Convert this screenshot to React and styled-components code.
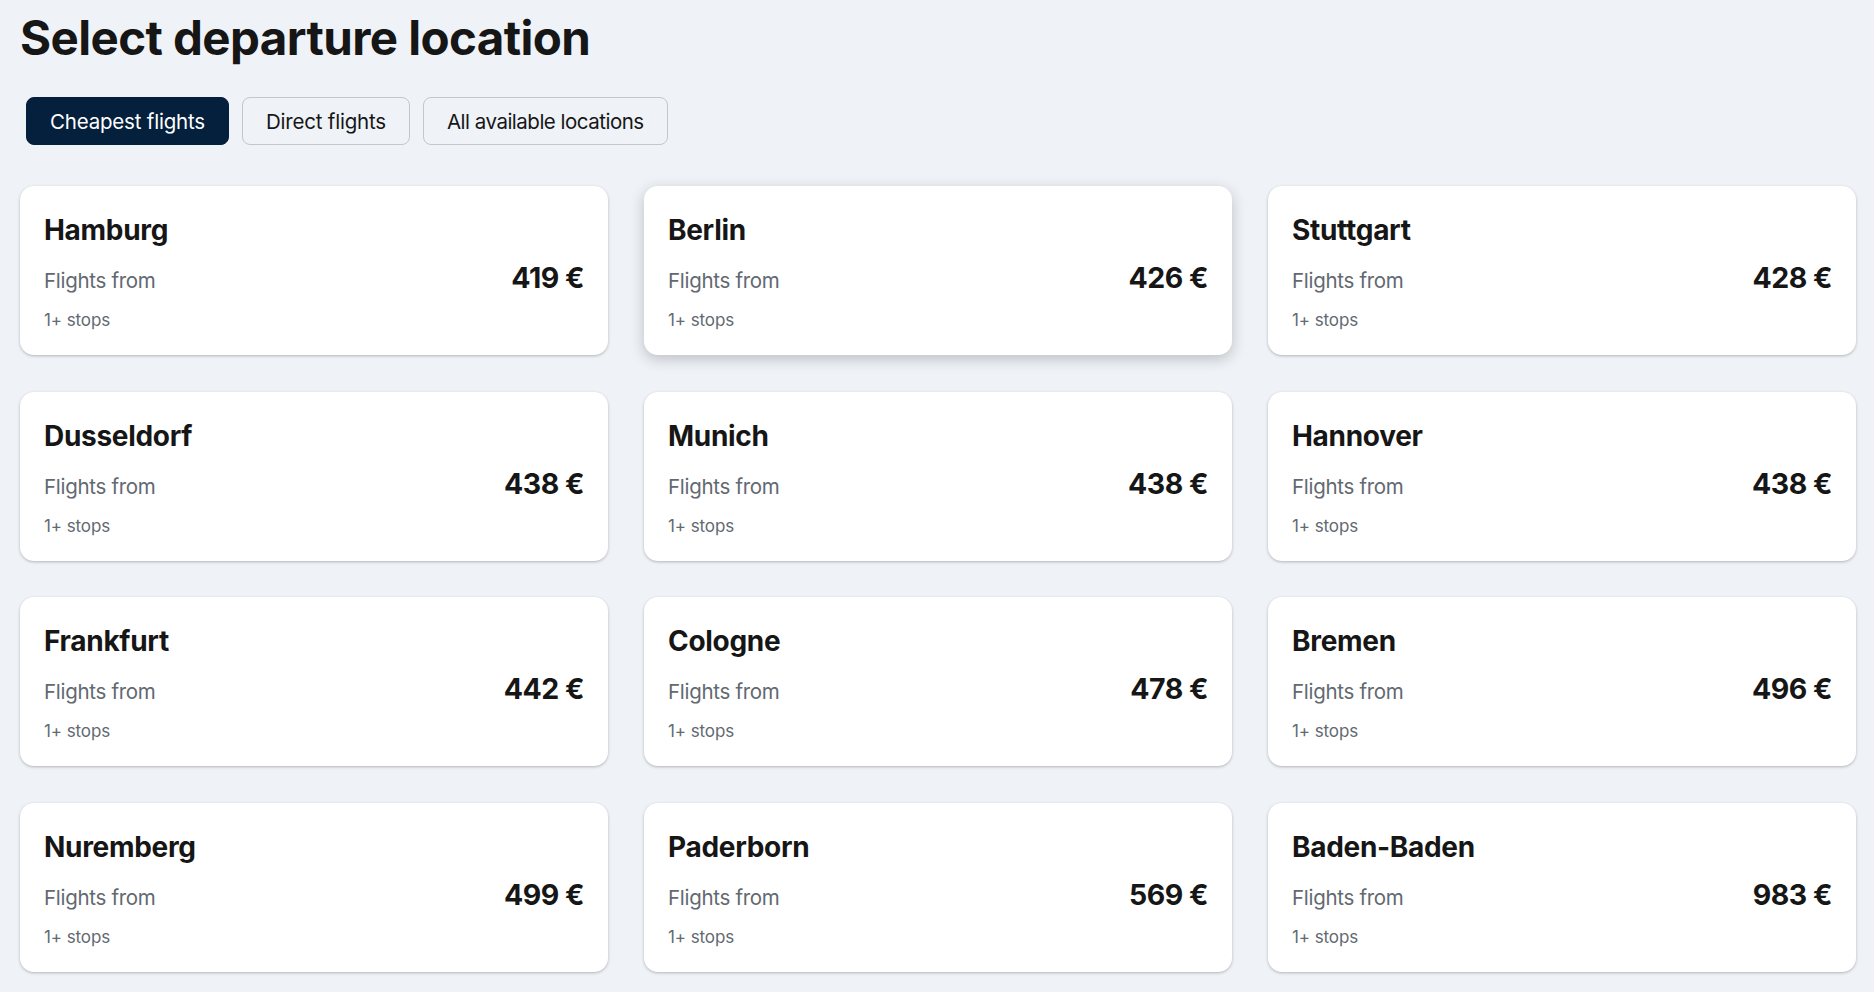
import styled, { createGlobalStyle } from "styled-components";

const GlobalStyle = createGlobalStyle`
  html, body {
    margin: 0;
    padding: 0;
    background: #eff3f8;
    font-family: Inter, "Noto Sans", "Liberation Sans", sans-serif;
    color: #161616;
  }
  * { box-sizing: border-box; }
`;

const Page = styled.div`
  width: 1874px;
  min-height: 992px;
  padding: 6px 18px 0 20px;
`;

const Title = styled.h1`
  margin: 0;
  font-size: 47.5px;
  line-height: 64px;
  font-weight: 700;
  letter-spacing: -0.6px;
`;

const Tabs = styled.div`
  display: flex;
  gap: 13px;
  margin: 27px 0 0 6px;
`;

const Tab = styled.button`
  height: 48px;
  padding: 0 23px;
  border-radius: 8px;
  font-family: inherit;
  font-size: 20.5px;
  letter-spacing: ${(p) => (p.$tight ? "-0.5px" : "-0.2px")};
  cursor: pointer;
  border: 1.5px solid ${(p) => (p.$active ? "#05203c" : "#c1c7cf")};
  background: ${(p) => (p.$active ? "#05203c" : "transparent")};
  color: ${(p) => (p.$active ? "#ffffff" : "#161616")};
`;

const Grid = styled.div`
  display: grid;
  grid-template-columns: repeat(3, 588px);
  column-gap: 36px;
  row-gap: 36.5px;
  margin-top: 41px;
`;

const Card = styled.a`
  display: flex;
  flex-direction: column;
  height: 169px;
  padding: 26px 24px 24px;
  background: #ffffff;
  border-radius: 14px;
  cursor: pointer;
  box-shadow: ${(p) =>
    p.$hover
      ? "0 4px 14px 0 rgba(37, 32, 31, 0.25)"
      : "0 1px 3px 0 rgba(37, 32, 31, 0.3)"};
`;

const City = styled.div`
  font-size: 28px;
  line-height: 36px;
  font-weight: 700;
  letter-spacing: -0.3px;
`;

const PriceRow = styled.div`
  display: flex;
  justify-content: space-between;
  align-items: baseline;
  margin-top: 10px;
  line-height: 40px;
`;

const Label = styled.span`
  font-size: 20.5px;
  color: #626971;
  letter-spacing: -0.3px;
`;

const Price = styled.span`
  font-size: 28.5px;
  font-weight: 700;
  letter-spacing: -0.5px;
`;

const Stops = styled.div`
  margin-top: 7px;
  font-size: 17px;
  line-height: 24px;
  color: #626971;
  letter-spacing: -0.1px;
`;

const locations = [
  ["Hamburg", 419],
  ["Berlin", 426],
  ["Stuttgart", 428],
  ["Dusseldorf", 438],
  ["Munich", 438],
  ["Hannover", 438],
  ["Frankfurt", 442],
  ["Cologne", 478],
  ["Bremen", 496],
  ["Nuremberg", 499],
  ["Paderborn", 569],
  ["Baden-Baden", 983],
];

const App = () => {
  return (
    <Page>
      <GlobalStyle />
      <Title>Select departure location</Title>
      <Tabs>
        <Tab $active>Cheapest flights</Tab>
        <Tab>Direct flights</Tab>
        <Tab $tight>All available locations</Tab>
      </Tabs>
      <Grid>
        {locations.map(([city, price]) => (
          <Card key={city} $hover={city === "Berlin"}>
            <City>{city}</City>
            <PriceRow>
              <Label>Flights from</Label>
              <Price>{price} €</Price>
            </PriceRow>
            <Stops>1+ stops</Stops>
          </Card>
        ))}
      </Grid>
    </Page>
  );
};

export default App;
